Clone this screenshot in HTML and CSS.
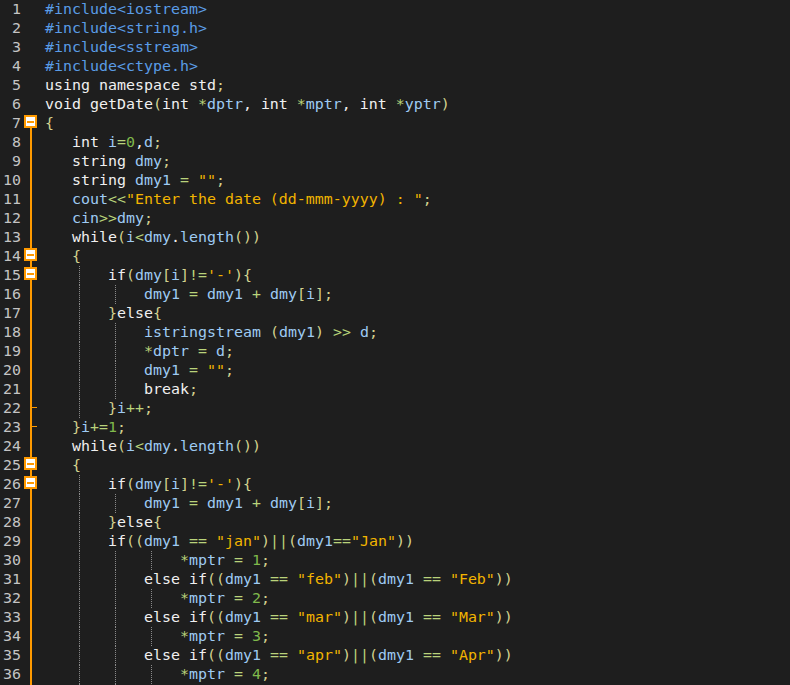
FILE: index.html
```html
<!DOCTYPE html>
<html>
<head>
<meta charset="utf-8">
<link rel="stylesheet" href="styles.css">
</head>
<body>
<div class="editor">
<div class="row"><span class="ln">1</span><span class="fold"></span><span class="code"><span class="p">#include&lt;iostream&gt;</span></span></div>
<div class="row"><span class="ln">2</span><span class="fold"></span><span class="code"><span class="p">#include&lt;string.h&gt;</span></span></div>
<div class="row"><span class="ln">3</span><span class="fold"></span><span class="code"><span class="p">#include&lt;sstream&gt;</span></span></div>
<div class="row"><span class="ln">4</span><span class="fold"></span><span class="code"><span class="p">#include&lt;ctype.h&gt;</span></span></div>
<div class="row"><span class="ln">5</span><span class="fold"></span><span class="code">using namespace std<span class="b">;</span></span></div>
<div class="row"><span class="ln">6</span><span class="fold"></span><span class="code">void getDate<span class="b">(</span>int <span class="o">*</span><span class="v">dptr</span>, int <span class="o">*</span><span class="v">mptr</span>, int <span class="o">*</span><span class="v">yptr</span><span class="b">)</span></span></div>
<div class="row"><span class="ln">7</span><span class="fold start"><span class="box"></span></span><span class="code"><span class="b">{</span></span></div>
<div class="row"><span class="ln">8</span><span class="fold line"></span><span class="code"><span class="i1"></span>int <span class="v">i</span><span class="o">=</span><span class="n">0</span>,<span class="v">d</span><span class="b">;</span></span></div>
<div class="row"><span class="ln">9</span><span class="fold line"></span><span class="code"><span class="i1"></span>string <span class="v">dmy</span><span class="b">;</span></span></div>
<div class="row"><span class="ln">10</span><span class="fold line"></span><span class="code"><span class="i1"></span>string <span class="v">dmy1</span> <span class="o">=</span> <span class="s">""</span><span class="b">;</span></span></div>
<div class="row"><span class="ln">11</span><span class="fold line"></span><span class="code"><span class="i1"></span><span class="v">cout</span><span class="o">&lt;&lt;</span><span class="s">"Enter the date (dd-mmm-yyyy) : "</span><span class="b">;</span></span></div>
<div class="row"><span class="ln">12</span><span class="fold line"></span><span class="code"><span class="i1"></span><span class="v">cin</span><span class="o">&gt;&gt;</span><span class="v">dmy</span><span class="b">;</span></span></div>
<div class="row"><span class="ln">13</span><span class="fold line"></span><span class="code"><span class="i1"></span>while<span class="b">(</span><span class="v">i</span><span class="o">&lt;</span><span class="v">dmy</span>.<span class="v">length</span><span class="b">())</span></span></div>
<div class="row"><span class="ln">14</span><span class="fold line"><span class="box"></span></span><span class="code"><span class="i1"></span><span class="b">{</span></span></div>
<div class="row"><span class="ln">15</span><span class="fold line"><span class="box"></span></span><span class="code"><span class="i1"></span><span class="ig"></span>if<span class="b">(</span><span class="v">dmy</span><span class="b">[</span><span class="v">i</span><span class="b">]</span><span class="o">!=</span><span class="s">'-'</span><span class="b">){</span></span></div>
<div class="row"><span class="ln">16</span><span class="fold line"></span><span class="code"><span class="i1"></span><span class="ig"></span><span class="ig"></span><span class="v">dmy1</span> <span class="o">=</span> <span class="v">dmy1</span> <span class="o">+</span> <span class="v">dmy</span><span class="b">[</span><span class="v">i</span><span class="b">];</span></span></div>
<div class="row"><span class="ln">17</span><span class="fold line"></span><span class="code"><span class="i1"></span><span class="ig"></span><span class="b">}</span>else<span class="b">{</span></span></div>
<div class="row"><span class="ln">18</span><span class="fold line"></span><span class="code"><span class="i1"></span><span class="ig"></span><span class="ig"></span><span class="v">istringstream</span> <span class="b">(</span><span class="v">dmy1</span><span class="b">)</span> <span class="o">&gt;&gt;</span> <span class="v">d</span><span class="b">;</span></span></div>
<div class="row"><span class="ln">19</span><span class="fold line"></span><span class="code"><span class="i1"></span><span class="ig"></span><span class="ig"></span><span class="o">*</span><span class="v">dptr</span> <span class="o">=</span> <span class="v">d</span><span class="b">;</span></span></div>
<div class="row"><span class="ln">20</span><span class="fold line"></span><span class="code"><span class="i1"></span><span class="ig"></span><span class="ig"></span><span class="v">dmy1</span> <span class="o">=</span> <span class="s">""</span><span class="b">;</span></span></div>
<div class="row"><span class="ln">21</span><span class="fold line"></span><span class="code"><span class="i1"></span><span class="ig"></span><span class="ig"></span>break<span class="b">;</span></span></div>
<div class="row"><span class="ln">22</span><span class="fold line tick"></span><span class="code"><span class="i1"></span><span class="ig"></span><span class="b">}</span><span class="v">i</span><span class="o">++</span><span class="b">;</span></span></div>
<div class="row"><span class="ln">23</span><span class="fold line tick"></span><span class="code"><span class="i1"></span><span class="b">}</span><span class="v">i</span><span class="o">+=</span><span class="n">1</span><span class="b">;</span></span></div>
<div class="row"><span class="ln">24</span><span class="fold line"></span><span class="code"><span class="i1"></span>while<span class="b">(</span><span class="v">i</span><span class="o">&lt;</span><span class="v">dmy</span>.<span class="v">length</span><span class="b">())</span></span></div>
<div class="row"><span class="ln">25</span><span class="fold line"><span class="box"></span></span><span class="code"><span class="i1"></span><span class="b">{</span></span></div>
<div class="row"><span class="ln">26</span><span class="fold line"><span class="box"></span></span><span class="code"><span class="i1"></span><span class="ig"></span>if<span class="b">(</span><span class="v">dmy</span><span class="b">[</span><span class="v">i</span><span class="b">]</span><span class="o">!=</span><span class="s">'-'</span><span class="b">){</span></span></div>
<div class="row"><span class="ln">27</span><span class="fold line"></span><span class="code"><span class="i1"></span><span class="ig"></span><span class="ig"></span><span class="v">dmy1</span> <span class="o">=</span> <span class="v">dmy1</span> <span class="o">+</span> <span class="v">dmy</span><span class="b">[</span><span class="v">i</span><span class="b">];</span></span></div>
<div class="row"><span class="ln">28</span><span class="fold line"></span><span class="code"><span class="i1"></span><span class="ig"></span><span class="b">}</span>else<span class="b">{</span></span></div>
<div class="row"><span class="ln">29</span><span class="fold line"></span><span class="code"><span class="i1"></span><span class="ig"></span>if<span class="b">((</span><span class="v">dmy1</span> <span class="o">==</span> <span class="s">"jan"</span><span class="b">)</span><span class="o">||</span><span class="b">(</span><span class="v">dmy1</span><span class="o">==</span><span class="s">"Jan"</span><span class="b">))</span></span></div>
<div class="row"><span class="ln">30</span><span class="fold line"></span><span class="code"><span class="i1"></span><span class="ig"></span><span class="ig"></span><span class="ig"></span><span class="o">*</span><span class="v">mptr</span> <span class="o">=</span> <span class="n">1</span><span class="b">;</span></span></div>
<div class="row"><span class="ln">31</span><span class="fold line"></span><span class="code"><span class="i1"></span><span class="ig"></span><span class="ig"></span>else if<span class="b">((</span><span class="v">dmy1</span> <span class="o">==</span> <span class="s">"feb"</span><span class="b">)</span><span class="o">||</span><span class="b">(</span><span class="v">dmy1</span> <span class="o">==</span> <span class="s">"Feb"</span><span class="b">))</span></span></div>
<div class="row"><span class="ln">32</span><span class="fold line"></span><span class="code"><span class="i1"></span><span class="ig"></span><span class="ig"></span><span class="ig"></span><span class="o">*</span><span class="v">mptr</span> <span class="o">=</span> <span class="n">2</span><span class="b">;</span></span></div>
<div class="row"><span class="ln">33</span><span class="fold line"></span><span class="code"><span class="i1"></span><span class="ig"></span><span class="ig"></span>else if<span class="b">((</span><span class="v">dmy1</span> <span class="o">==</span> <span class="s">"mar"</span><span class="b">)</span><span class="o">||</span><span class="b">(</span><span class="v">dmy1</span> <span class="o">==</span> <span class="s">"Mar"</span><span class="b">))</span></span></div>
<div class="row"><span class="ln">34</span><span class="fold line"></span><span class="code"><span class="i1"></span><span class="ig"></span><span class="ig"></span><span class="ig"></span><span class="o">*</span><span class="v">mptr</span> <span class="o">=</span> <span class="n">3</span><span class="b">;</span></span></div>
<div class="row"><span class="ln">35</span><span class="fold line"></span><span class="code"><span class="i1"></span><span class="ig"></span><span class="ig"></span>else if<span class="b">((</span><span class="v">dmy1</span> <span class="o">==</span> <span class="s">"apr"</span><span class="b">)</span><span class="o">||</span><span class="b">(</span><span class="v">dmy1</span> <span class="o">==</span> <span class="s">"Apr"</span><span class="b">))</span></span></div>
<div class="row"><span class="ln">36</span><span class="fold line"></span><span class="code"><span class="i1"></span><span class="ig"></span><span class="ig"></span><span class="ig"></span><span class="o">*</span><span class="v">mptr</span> <span class="o">=</span> <span class="n">4</span><span class="b">;</span></span></div>
<div class="row"><span class="ln"></span><span class="fold line"></span><span class="code"><span class="i1"></span><span class="ig"></span><span class="ig"></span></span></div>
</div>
</body>
</html>
```
FILE: styles.css
```css
html, body {
  margin: 0;
  padding: 0;
  background: #1e1e1e;
  height: 100%;
  overflow: hidden;
}
.editor {
  display: flex;
  flex-direction: column;
  font-family: "DejaVu Sans Mono", "Liberation Mono", monospace;
  font-size: 14.95px;
  color: #f0f0f0;
}
.row {
  display: flex;
  height: 19px;
  line-height: 19px;
  white-space: pre;
  flex: none;
}
.ln {
  width: 18px;
  margin-left: 3px;
  text-align: right;
  color: #c4c4c4;
  flex: none;
}
.fold {
  width: 14px;
  margin-left: 3px;
  flex: none;
  display: flex;
  align-items: flex-start;
}
.fold.line {
  background: linear-gradient(#ff9a00, #ff9a00) no-repeat 6px 0 / 2px 100%;
}
.fold.start {
  background: linear-gradient(#ff9a00, #ff9a00) no-repeat 6px 14px / 2px 100%;
}
.fold.tick {
  background:
    linear-gradient(#ff9a00, #ff9a00) no-repeat 6px 0 / 2px 100%,
    linear-gradient(#ff9a00, #ff9a00) no-repeat 6px 8px / 7px 1px;
}
.box {
  box-sizing: border-box;
  width: 13px;
  height: 13px;
  margin-top: 1px;
  border: 2px solid #ff9a00;
  background: #fff linear-gradient(#ff9a00, #ff9a00) no-repeat 1px 3.5px / 7px 2px;
}
.code {
  display: block;
  padding-left: 7px;
  flex: 1;
}
.i1 {
  display: inline-block;
  width: 27px;
  height: 19px;
  vertical-align: top;
}
.ig {
  display: inline-block;
  width: 36px;
  height: 19px;
  vertical-align: top;
  background: repeating-linear-gradient(to bottom, #8a8a8a 0 1px, transparent 1px 2px) no-repeat 7px 0 / 1px 100%;
}
.p { color: #5a9ce6; }
.v { color: #9ecbf3; }
.o { color: #b9d37a; }
.b { color: #d3d28e; }
.s { color: #f2b400; }
.n { color: #80b94c; }
```
